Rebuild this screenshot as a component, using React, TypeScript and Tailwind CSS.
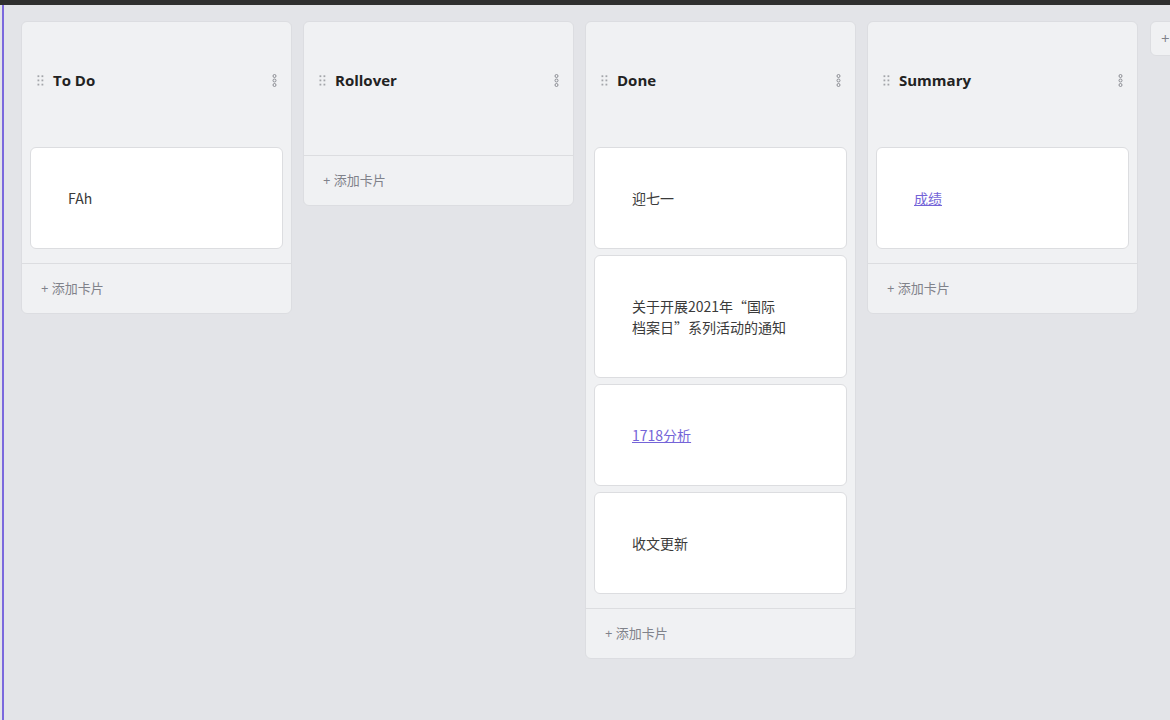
import React from "react";

type Card = { text: string; link?: boolean };
type Column = { title: string; cards: Card[] };

const columns: Column[] = [
  { title: "To Do", cards: [{ text: "FAh" }] },
  { title: "Rollover", cards: [] },
  {
    title: "Done",
    cards: [
      { text: "迎七一" },
      { text: "关于开展2021年“国际档案日”系列活动的通知" },
      { text: "1718分析", link: true },
      { text: "收文更新" },
    ],
  },
  { title: "Summary", cards: [{ text: "成绩", link: true }] },
];

function DragHandle() {
  return (
    <svg width="7" height="11" viewBox="0 0 7 11" className="shrink-0">
      {[1.2, 5.4, 9.6].map((y) => (
        <g key={y}>
          <rect x="0.5" y={y - 0.9} width="1.8" height="1.8" fill="#a3a5aa" />
          <rect x="4.5" y={y - 0.9} width="1.8" height="1.8" fill="#a3a5aa" />
        </g>
      ))}
    </svg>
  );
}

function MoreIcon() {
  return (
    <svg width="5" height="13" viewBox="0 0 5 13" className="shrink-0">
      {[2, 6.5, 11].map((y) => (
        <circle key={y} cx="2.5" cy={y} r="1.5" fill="none" stroke="#8a8c92" strokeWidth="1" />
      ))}
    </svg>
  );
}

function BoardColumn({ column }: { column: Column }) {
  return (
    <div className="w-[271px] shrink-0 self-start rounded-[6px] border border-[#dcdde1] bg-[#f0f1f3]">
      <div className="flex h-[117px] items-center pl-[15px] pr-[14px]">
        <DragHandle />
        <h2 className="ml-[9px] flex-1 text-[15px] font-bold text-[#222]">{column.title}</h2>
        <MoreIcon />
      </div>
      {column.cards.length > 0 ? (
        <div className="flex flex-col gap-[6px] px-2 pt-2 pb-[14px]">
          {column.cards.map((card, i) => (
            <div
              key={i}
              className="rounded-[6px] border border-[#dcdde0] bg-white pt-[40px] pb-[39px] pl-[37px]"
            >
              <p
                className="w-[156px] text-[14px] leading-[21px] text-[#3a3a3a]"
                style={{ fontFamily: '"Noto Sans CJK SC", "Open Sans", sans-serif' }}
              >
                {card.link ? (
                  <a href="#" className="text-[#7464d8] underline">
                    {card.text}
                  </a>
                ) : (
                  card.text
                )}
              </p>
            </div>
          ))}
        </div>
      ) : (
        <div className="h-[16px]" />
      )}
      <div className="flex h-[50px] items-center border-t border-[#dcdde0] pl-[19px] text-[13px] text-[#80828a]">
        + 添加卡片
      </div>
    </div>
  );
}

export default function App() {
  return (
    <div
      className="flex h-[720px] w-[1170px] flex-col overflow-hidden bg-[#e3e4e8]"
      style={{ fontFamily: '"Open Sans", "Noto Sans CJK SC", sans-serif' }}
    >
      <div className="h-[5px] shrink-0 bg-[#2f2f2f]" />
      <div className="ml-[2px] flex flex-1 border-l-2 border-[#7b68dd]">
        <div className="flex gap-[11px] pt-[16px] pl-[17px]">
          {columns.map((c) => (
            <BoardColumn key={c.title} column={c} />
          ))}
          <button className="ml-[1px] flex h-[35px] w-[120px] shrink-0 items-center rounded-[6px] border border-[#dcdde1] bg-[#f0f1f3] pl-[10px] text-[15px] text-[#80828a]">
            +
          </button>
        </div>
      </div>
    </div>
  );
}
